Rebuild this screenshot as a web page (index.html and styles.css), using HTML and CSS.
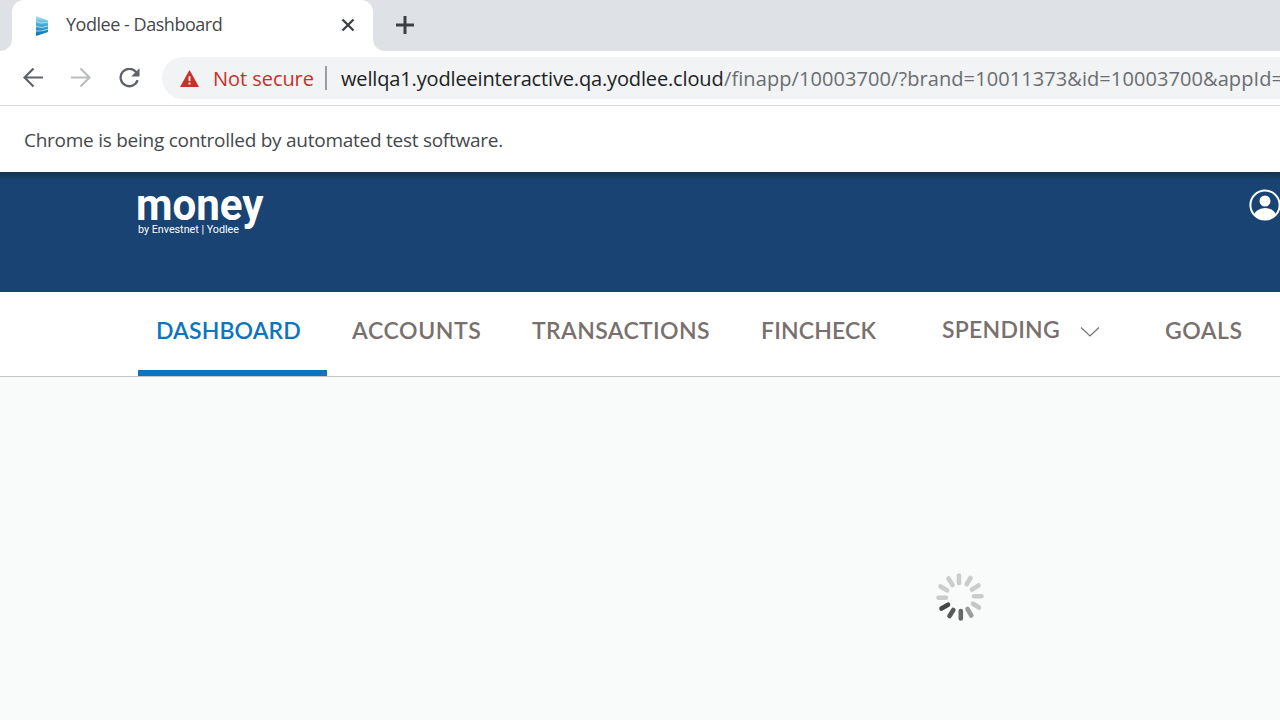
FILE: index.html
```html
<!DOCTYPE html>
<html lang="en">
<head>
<meta charset="utf-8">
<title>Yodlee - Dashboard</title>
<link rel="stylesheet" href="styles.css">
</head>
<body>
<div class="tabstrip">
  <div class="prev-tab"></div>
  <div class="tab">
    <svg class="favicon" viewBox="0 0 12 20" width="12" height="20">
      <defs><linearGradient id="fav" x1="0" y1="0" x2="0" y2="1"><stop offset="0" stop-color="#b5e4f0"/><stop offset=".45" stop-color="#3fa9d6"/><stop offset="1" stop-color="#0b6fae"/></linearGradient></defs>
      <path d="M0 0 12 4.500V16L0 20Z" fill="url(#fav)"/>
      <path d="M0 5.500 5 7 12 6.300M0 10.500 6 11.500 12 10M0 15 6 14.800 12 13.200" stroke="#a5dcef" stroke-width="1.100" fill="none"/>
    </svg>
    <span class="tab-title">Yodlee - Dashboard</span>
    <svg class="tab-close" viewBox="0 0 14 14" width="14" height="14"><path d="M1.500 1.500 12.500 12.500M12.500 1.500 1.500 12.500" stroke="#3c4043" stroke-width="2.300" fill="none"/></svg>
  </div>
  <div class="strip-rest">
    <svg viewBox="0 0 18 18" width="18" height="18"><path d="M9 0V18M0 9H18" stroke="#3c4043" stroke-width="3"/></svg>
  </div>
</div>
<div class="toolbar">
  <svg class="nav-icon" viewBox="0 0 20 20" width="20" height="20"><path d="M20 9.500H2M10.500 .5 1.500 9.500 10.500 18.500" stroke="#5f6368" stroke-width="2.200" fill="none"/></svg>
  <svg class="nav-icon" viewBox="0 0 20 20" width="20" height="20"><path d="M0 9.500H18M9.500 .5 18.500 9.500 9.500 18.500" stroke="#babcbe" stroke-width="2.200" fill="none"/></svg>
  <svg class="nav-icon reload" viewBox="0 0 22 20" width="22" height="20"><path d="M18.600 12.200A8.700 8.700 0 1 1 17.200 4.200" stroke="#5f6368" stroke-width="2.300" fill="none"/><path d="M20.500 .3V8.500H12.200Z" fill="#5f6368"/></svg>
  <div class="omnibox">
    <svg class="warn" viewBox="0 0 19 17" width="19" height="17"><path d="M9.500 0 19 17H0Z" fill="#c9302a"/><path d="M9.500 6.300V11M9.500 12.500V14.500" stroke="#f1f3f4" stroke-width="1.900"/></svg>
    <span class="not-secure">Not secure</span>
    <span class="divider"></span>
    <span class="host">wellqa1.yodleeinteractive.qa.yodlee.cloud</span><span class="path">/finapp/10003700/?brand=10011373&amp;id=10003700&amp;appId=</span>
  </div>
</div>
<div class="infobar"><span>Chrome is being controlled by automated test software.</span></div>
<header class="banner">
  <svg class="logo" viewBox="0 0 132 48" width="132" height="48">
    <text class="logo-name" x="-2" y="31" textLength="127.500" lengthAdjust="spacingAndGlyphs">money</text>
    <text class="logo-by" x="0" y="44" textLength="101" lengthAdjust="spacingAndGlyphs">by Envestnet | Yodlee</text>
  </svg>
  <svg class="user" viewBox="0 0 32 32" width="32" height="32">
    <clipPath id="ring"><circle cx="16" cy="16" r="14"/></clipPath>
    <circle cx="16" cy="16" r="14.600" stroke="#fff" stroke-width="2" fill="none"/>
    <circle cx="16" cy="12" r="5.500" fill="#fff"/>
    <ellipse cx="16" cy="28" rx="11.500" ry="9" fill="#fff" clip-path="url(#ring)"/>
  </svg>
</header>
<nav class="menu">
  <a class="item active">DASHBOARD</a>
  <a class="item accounts">ACCOUNTS</a>
  <a class="item transactions">TRANSACTIONS</a>
  <a class="item fincheck">FINCHECK</a>
  <a class="item spending">SPENDING<svg class="chevron" viewBox="0 0 20 12" width="20" height="12"><path d="M1 1.500 10 10 19 1.500" stroke="#78706e" stroke-width="1.200" fill="none"/></svg></a>
  <a class="item goals">GOALS</a>
</nav>
<main class="content">
  <svg class="spinner" viewBox="-25 -25 50 50" width="50" height="50">
    <g stroke-width="4.600" stroke-linecap="round">
      <path d="M-1-21.500V-14" stroke="#cbcccc"/>
      <path d="M10.500-19 6.700-12.800" stroke="#cbcccc"/>
      <path d="M18.500-11.500 12-7.500" stroke="#cbcccc"/>
      <path d="M21.500-.8H14" stroke="#cbcccc"/>
      <path d="M19 10.500 13 6.700" stroke="#c5c6c6"/>
      <path d="M11.300 18.500 7.500 12" stroke="#9c9d9d"/>
      <path d="M.8 21.500V14" stroke="#686868"/>
      <path d="M-10.500 19-6.700 13" stroke="#595959"/>
      <path d="M-18.500 11.500-12 7.700" stroke="#454545"/>
      <path d="M-21.500.8H-14" stroke="#cbcccc"/>
      <path d="M-19.500-10.500-13-6.700" stroke="#cbcccc"/>
      <path d="M-11.500-18.500-7.500-12" stroke="#cbcccc"/>
    </g>
  </svg>
</main>
</body>
</html>
```
FILE: styles.css
```css
* { box-sizing: border-box; }
body {
  margin: 0;
  width: 1280px;
  height: 720px;
  overflow: hidden;
  display: flex;
  flex-direction: column;
  background: #fff;
  font-family: "Open Sans", "Noto Sans", sans-serif;
  white-space: nowrap;
}
svg { display: block; flex: none; }
.tabstrip { display: flex; height: 51px; flex: none; background: #fff; }
.prev-tab { width: 12px; background: #dee1e6; border-bottom-right-radius: 12px; }
.tab {
  display: flex;
  align-items: center;
  width: 361px;
  padding: 0 18px 2px 24px;
  position: relative;
  background: linear-gradient(#dee1e6 12px, #fff 12px);
}
.tab::before {
  content: "";
  position: absolute;
  inset: 0;
  background: #fff;
  border-radius: 12px 12px 0 0;
}
.tab > * { position: relative; }
.favicon { margin: 2px 18px 0 0; }
.tab-title { margin-bottom: 1px; font-size: 18px; letter-spacing: -0.47px; color: #45484c; }
.tab-close { margin-left: auto; }
.strip-rest {
  flex: 1;
  display: flex;
  align-items: center;
  padding: 0 0 2px 23px;
  background: #dee1e6;
  border-bottom-left-radius: 12px;
}
.toolbar {
  display: flex;
  align-items: center;
  height: 55px;
  flex: none;
  padding-left: 23px;
  border-bottom: 1px solid #d9dbde;
}
.nav-icon { margin-right: 28px; }
.reload { margin-right: 21px; }
.omnibox {
  display: flex;
  align-items: center;
  flex: 1;
  height: 42px;
  padding-left: 18px;
  overflow: hidden;
  background: #f1f3f4;
  border-radius: 21px 0 0 21px;
  font-size: 20px;
}
.warn { margin-right: 14px; }
.not-secure { width: 100px; letter-spacing: -0.05px; color: #c5322a; }
.divider { flex: none; width: 2px; height: 24px; margin: 0 14px 0 12px; background: #9a9da1; }
.host { flex: none; width: 383px; letter-spacing: -0.15px; color: #202124; }
.path { flex: none; letter-spacing: 0.08px; color: #6a6d71; }
.infobar {
  display: flex;
  align-items: center;
  height: 66px;
  flex: none;
  padding: 1px 0 0 24px;
  font-size: 19px;
  letter-spacing: -0.26px;
  color: #45484c;
}
.banner {
  display: flex;
  justify-content: space-between;
  align-items: flex-start;
  height: 120px;
  flex: none;
  padding: 17px 0 0 138px;
  background: linear-gradient(#12304f, #194372 8px);
}
.logo { fill: #fff; overflow: visible; }
.logo-name { font: 700 45px Roboto, sans-serif; }
.logo-by { font: 400 11.5px Roboto, sans-serif; }
.user { margin-right: -1px; }
.menu {
  display: flex;
  height: 85px;
  flex: none;
  padding-left: 138px;
  border-bottom: 1px solid #c6c5c8;
  box-shadow: 0 1px 1px #e8e8e8;
  font-family: Lato, sans-serif;
  font-size: 23px;
  font-weight: 600;
  color: #78706e;
}
.item { display: flex; flex: none; height: 84px; padding-top: 24px; line-height: 28px; }
.active { width: 189px; padding-left: 18px; letter-spacing: 0.1px; color: #0d75bf; border-bottom: 6px solid #0d75bf; }
.accounts { width: 180px; padding-left: 25px; letter-spacing: 0.6px; }
.transactions { width: 229px; padding-left: 25px; letter-spacing: 0.35px; }
.fincheck { width: 182px; padding-left: 25px; letter-spacing: 0.15px; }
.spending { width: 222px; padding: 23px 40px 0 24px; justify-content: space-between; letter-spacing: 0.25px; }
.chevron { margin: 11px 0 0; }
.goals { padding-left: 25px; letter-spacing: 0.5px; }
.content { flex: 1; padding: 195px 0 0 935px; background: #f9fbfa; }
```
